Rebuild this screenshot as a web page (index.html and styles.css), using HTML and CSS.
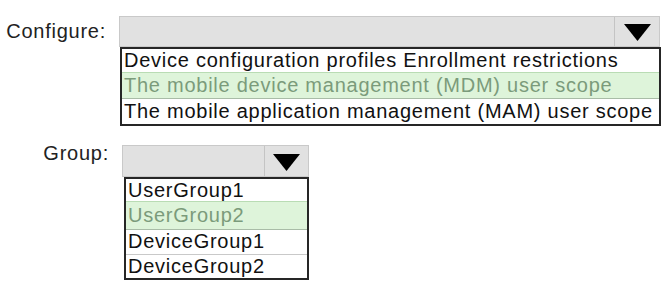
FILE: index.html
```html
<!DOCTYPE html>
<html>
<head>
<meta charset="utf-8">
<link rel="stylesheet" href="styles.css">
</head>
<body>
<div class="page">
  <div class="field field-configure">
    <div class="label">Configure:</div>
    <div class="control">
      <div class="select">
        <div class="select-value"></div>
        <div class="select-btn"><svg width="27" height="17" viewBox="0 0 27 17"><polygon points="0,0 27,0 13.5,17" fill="#000"/></svg></div>
      </div>
      <div class="list">
        <div class="item">Device configuration profiles Enrollment restrictions</div>
        <div class="item sel">The mobile device management (MDM) user scope</div>
        <div class="item">The mobile application management (MAM) user scope</div>
      </div>
    </div>
  </div>
  <div class="field field-group">
    <div class="label">Group:</div>
    <div class="control">
      <div class="select">
        <div class="select-value"></div>
        <div class="select-btn"><svg width="27" height="17" viewBox="0 0 27 17"><polygon points="0,0 27,0 13.5,17" fill="#000"/></svg></div>
      </div>
      <div class="list">
        <div class="item r1">UserGroup1</div>
        <div class="item sel r2">UserGroup2</div>
        <div class="item r3">DeviceGroup1</div>
        <div class="item r4">DeviceGroup2</div>
      </div>
    </div>
  </div>
</div>
</body>
</html>
```

FILE: styles.css
```css
* { box-sizing: border-box; }
html, body { margin: 0; padding: 0; background: #fff; }
body {
  font-family: "Liberation Sans", Arial, sans-serif;
  font-size: 20px;
  letter-spacing: 0.75px;
  color: #1a1a1a;
  width: 670px;
  height: 284px;
  overflow: hidden;
}
.page { padding-top: 16px; }
.field { display: flex; }
.label { color: #222; text-align: right; }
.control { display: flex; flex-direction: column; }

.select {
  display: flex;
  height: 31px;
  background: #e1e1e1;
  border: 1px solid #c9c9c9;
}
.select-value { flex: 1; }
.select-btn {
  border-left: 1px solid #c4c4c4;
  display: flex;
  align-items: center;
  justify-content: center;
  padding-top: 2px;
}
.list {
  background: #fff;
  border: 2px solid #262626;
}
.item {
  white-space: nowrap;
  padding-left: 2px;
  color: #111;
  border-top: 1px solid #c9d6c8;
}
.item:first-child { border-top: none; }
.item.sel {
  background: #def4da;
  color: #7b9b7b;
  border-top: 1px solid #b9dcb4;
  border-bottom: 1px solid #a9bca7;
}
.item.sel + .item { border-top: none; }

/* Configure */
.field-configure .label { width: 106px; padding-top: 3px; margin-right: 13px; line-height: 24px; }
.field-configure .select { width: 541px; }
.field-configure .select-btn { width: 45px; }
.field-configure .list { width: 541px; margin-left: 1px; }
.field-configure .item { height: 25px; line-height: 24px; }
.field-configure .item:first-child { height: 23px; line-height: 23px; }
.field-configure .item.sel { height: 27px; line-height: 25px; }

/* Group */
.field-group { margin-top: 19px; }
.field-group .label { width: 109px; margin-right: 13px; line-height: 20px; margin-top: -2px; }
.field-group .select { width: 187px; height: 32px; }
.field-group .select-btn { width: 44px; }
.field-group .list { width: 185px; margin-left: 2px; }
.field-group .item { line-height: 22px; }
.field-group .item.r1 { height: 22px; }
.field-group .item.r2 { height: 29px; line-height: 26px; }
.field-group .item.r3 { height: 24px; }
.field-group .item.r4 { height: 24px; border-top: 1px solid #c9c9c9; }
```
